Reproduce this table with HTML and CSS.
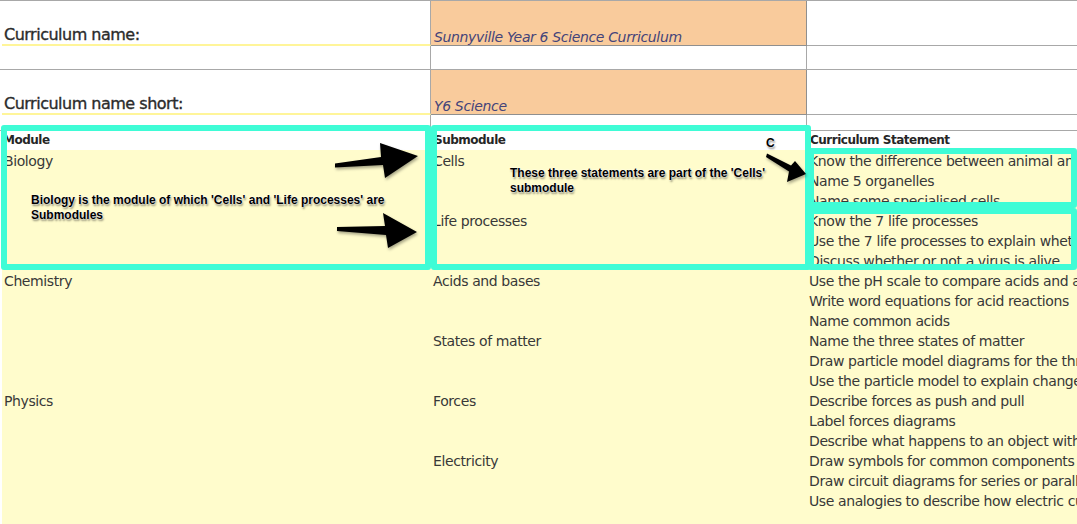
FILE: index.html
```html
<!DOCTYPE html>
<html>
<head>
<meta charset="utf-8">
<title>Curriculum</title>
<link rel="stylesheet" href="styles.css">
</head>
<body>
<div class="sheet">
  <div class="row info-row">
    <div class="cell label">Curriculum name:</div>
    <div class="cell value">Sunnyville Year 6 Science Curriculum</div>
    <div class="cell"></div>
  </div>
  <div class="row spacer-row">
    <div class="cell"></div>
    <div class="cell"></div>
    <div class="cell"></div>
  </div>
  <div class="row info-row">
    <div class="cell label">Curriculum name short:</div>
    <div class="cell value">Y6 Science</div>
    <div class="cell"></div>
  </div>
  <div class="row gap-row">
    <div class="cell"></div>
    <div class="cell"></div>
    <div class="cell"></div>
  </div>
  <div class="row head-row">
    <div class="head">Module</div>
    <div class="head">Submodule</div>
    <div class="head">Curriculum Statement</div>
  </div>
  <div class="data">
    <div>Biology</div><div>Cells</div><div>Know the difference between animal and plant cells</div>
    <div></div><div></div><div>Name 5 organelles</div>
    <div></div><div></div><div>Name some specialised cells</div>
    <div></div><div>Life processes</div><div>Know the 7 life processes</div>
    <div></div><div></div><div>Use the 7 life processes to explain whether something is alive</div>
    <div></div><div></div><div>Discuss whether or not a virus is alive</div>
    <div>Chemistry</div><div>Acids and bases</div><div>Use the pH scale to compare acids and alkalis</div>
    <div></div><div></div><div>Write word equations for acid reactions</div>
    <div></div><div></div><div>Name common acids</div>
    <div></div><div>States of matter</div><div>Name the three states of matter</div>
    <div></div><div></div><div>Draw particle model diagrams for the three states</div>
    <div></div><div></div><div>Use the particle model to explain changes of state</div>
    <div>Physics</div><div>Forces</div><div>Describe forces as push and pull</div>
    <div></div><div></div><div>Label forces diagrams</div>
    <div></div><div></div><div>Describe what happens to an object with balanced forces</div>
    <div></div><div>Electricity</div><div>Draw symbols for common components</div>
    <div></div><div></div><div>Draw circuit diagrams for series or parallel circuits</div>
    <div></div><div></div><div>Use analogies to describe how electric current flows</div>
  </div>
</div>

<div class="overlay">
  <div class="box box-module"></div>
  <div class="box box-sub"></div>
  <div class="box box-cells"></div>
  <div class="box box-life"></div>
  <svg class="arrows" width="1077" height="524" viewBox="0 0 1077 524">
    <defs>
      <filter id="sh" x="-20%" y="-20%" width="140%" height="160%">
        <feDropShadow dx="1" dy="2" stdDeviation="1.5" flood-color="#000" flood-opacity="0.35"/>
      </filter>
    </defs>
    <polygon filter="url(#sh)" fill="#000" points="335,163.5 381,157 380,143 418,156 385,178 383,165 335,167.5"/>
    <polygon filter="url(#sh)" fill="#000" points="337,227 385,226 383,213 417,232 388,248 386,235 337,231"/>
    <polygon filter="url(#sh)" fill="#000" points="767,153.5 791,165.5 795,161 806,174 787,182 789,171.5 766,157"/>
  </svg>
  <div class="note note-module">Biology is the module of which 'Cells' and 'Life processes' are<br>Submodules</div>
  <div class="note note-cells">These three statements are part of the 'Cells'<br>submodule</div>
  <div class="note note-c">C</div>
</div>
</body>
</html>
```

FILE: styles.css
```css
html, body {
  margin: 0;
  padding: 0;
}

body {
  width: 1077px;
  height: 524px;
  overflow: hidden;
  position: relative;
  background: #ffffff;
  font-family: "DejaVu Sans", sans-serif;
  color: #333333;
}

.sheet {
  border-top: 1px solid #a8a8a8;
}

.row {
  display: grid;
  grid-template-columns: 431px 376px 1fr;
}

.cell {
  box-sizing: border-box;
  border-right: 1px solid #a8a8a8;
  border-bottom: 1px solid #a8a8a8;
}

.cell:last-child {
  border-right: 0;
}

.info-row {
  height: 45px;
}

.spacer-row {
  height: 24px;
}

.gap-row {
  height: 16px;
}

.label {
  display: flex;
  align-items: flex-end;
  margin-left: 2px;
  padding: 0 0 1px 2px;
  border-bottom: 2px solid #fff599;
  font-size: 16px;
  line-height: 16px;
  letter-spacing: -0.5px;
  color: #2b2b2b;
  -webkit-text-stroke: 0.35px #2b2b2b;
  white-space: nowrap;
}

.value {
  display: flex;
  align-items: flex-end;
  background: #f9cb9c;
  border-right-color: #8f8f8f;
  border-bottom-color: #8f8f8f;
  padding: 0 0 1px 3px;
  font-style: italic;
  font-size: 14px;
  line-height: 14px;
  letter-spacing: -0.35px;
  color: #44447a;
  white-space: nowrap;
}

.head-row {
  height: 19px;
}

.head {
  padding-left: 3px;
  font-weight: bold;
  font-size: 12px;
  line-height: 19px;
  letter-spacing: -0.5px;
  color: #262626;
  white-space: nowrap;
}

.data {
  display: grid;
  grid-template-columns: 429px 376px 1fr;
  grid-auto-rows: 20px;
  margin-left: 2px;
  height: 374px;
  background: #fffccc;
}

.data > div {
  padding-left: 2px;
  white-space: nowrap;
  overflow: hidden;
  font-size: 14px;
  line-height: 22px;
  letter-spacing: -0.4px;
  color: #383838;
}

/* annotation layer drawn on top of the sheet */
.overlay {
  position: absolute;
  left: 0;
  top: 0;
  width: 1077px;
  height: 524px;
  pointer-events: none;
}

.box {
  position: absolute;
  box-sizing: border-box;
  border: 6px solid #3ffcd6;
  border-radius: 3px;
}

.box-module {
  left: 1px;
  top: 125px;
  width: 430px;
  height: 145px;
}

.box-sub {
  left: 431px;
  top: 125px;
  width: 380px;
  height: 145px;
}

.box-cells {
  left: 808px;
  top: 148px;
  width: 269px;
  height: 60px;
}

.box-life {
  left: 808px;
  top: 208px;
  width: 269px;
  height: 62px;
}

.arrows {
  position: absolute;
  left: 0;
  top: 0;
}

.note {
  position: absolute;
  font-family: "Liberation Sans", Arial, sans-serif;
  font-weight: bold;
  font-size: 12px;
  line-height: 15px;
  color: #000000;
  white-space: nowrap;
  text-shadow: 0 0 1px #ffffff, 0 0 2px #ffffff, 1px 2px 2px rgba(0, 0, 0, 0.45);
}

.note-module {
  left: 31px;
  top: 193px;
}

.note-cells {
  left: 510px;
  top: 166px;
}

.note-c {
  left: 766px;
  top: 136px;
  font-size: 12px;
}
```
